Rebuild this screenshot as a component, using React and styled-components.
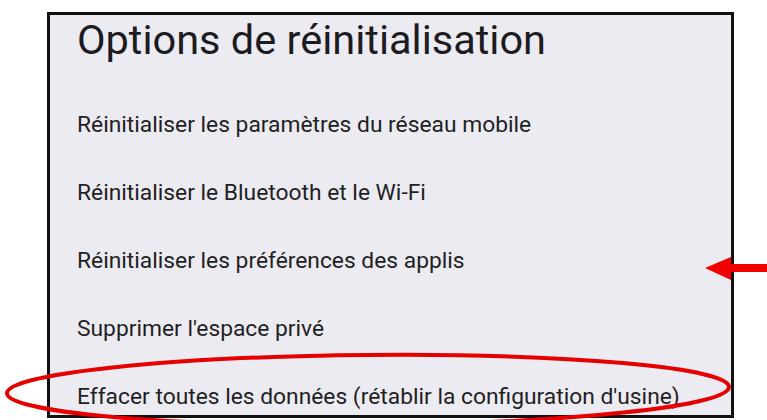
import styled, { createGlobalStyle } from 'styled-components';

const GlobalStyle = createGlobalStyle`
	html, body {
		margin: 0;
		padding: 0;
		background: #ffffff;
	}
	body {
		width: 767px;
		height: 420px;
		overflow: hidden;
		font-family: Roboto, "Noto Sans", sans-serif;
	}
`

const Page = styled.div`
	position: relative;
	width: 767px;
	height: 420px;
	padding: 12px 0 0 47px;
	box-sizing: border-box;
`

const Panel = styled.section`
	width: 687px;
	height: 406px;
	box-sizing: border-box;
	border: 3px solid #111111;
	background-color: #ecebf1;
	padding: 0 0 0 27px;
	display: flex;
	flex-direction: column;
	overflow: hidden;
`

const Title = styled.h1`
	margin: 0;
	font-size: 41.5px;
	font-weight: 400;
	line-height: 50px;
	color: #1c1b1f;
`

const OptionList = styled.ul`
	list-style: none;
	margin: 25px 0 0 0;
	padding: 0;
	display: flex;
	flex-direction: column;
`

const Option = styled.li`
	flex: 0 0 68px;
	display: flex;
	align-items: center;
	font-size: 22.8px;
	line-height: 27px;
	color: #1f1f23;
`

const Overlay = styled.svg`
	position: absolute;
	left: 0;
	top: 0;
	width: 767px;
	height: 420px;
	pointer-events: none;
	overflow: visible;
`

const options = [
	"Réinitialiser les paramètres du réseau mobile",
	"Réinitialiser le Bluetooth et le Wi-Fi",
	"Réinitialiser les préférences des applis",
	"Supprimer l'espace privé",
	"Effacer toutes les données (rétablir la configuration d'usine)",
];

const App = () => {
	return (
		<>
			<GlobalStyle />
			<Page>
				<Panel>
					<Title>Options de réinitialisation</Title>
					<OptionList>
						{options.map((label) => (
							<Option key={label}>{label}</Option>
						))}
					</OptionList>
				</Panel>

				{/* annotations rouges */}
				<Overlay viewBox="0 0 767 420">
					<ellipse
						cx="368"
						cy="390"
						rx="361"
						ry="35"
						fill="none"
						stroke="#e60000"
						strokeWidth="4"
						transform="rotate(-0.5 368 390)"
					/>
					<polygon points="705,268 731,257 731,264 767,264 767,272 731,272 731,280" fill="#f20000" />
				</Overlay>
			</Page>
		</>
	)
}

export default App;
